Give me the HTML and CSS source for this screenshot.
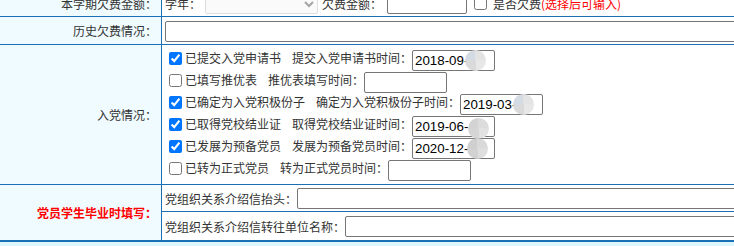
FILE: index.html
```
<!DOCTYPE html>
<html lang="zh-CN">
<head>
<meta charset="utf-8">
<title>入党情况</title>
<link rel="stylesheet" href="styles.css">
</head>
<body>
<div class="form">
  <div class="row r1">
    <div class="label">本学期欠费金额：</div>
    <div class="field">
      <span class="txt">学年：</span>
      <select class="sel" disabled><option></option></select>
      <span class="txt">欠费金额：</span>
      <input class="inp inp-fee" type="text">
      <input class="chk chk-fee" type="checkbox">
      <span class="txt">是否欠费<span class="warn">(选择后可输入)</span></span>
    </div>
  </div>
  <div class="row r2">
    <div class="label">历史欠费情况：</div>
    <div class="field"><input class="inp inp-wide" type="text"></div>
  </div>
  <div class="row r3">
    <div class="label">入党情况：</div>
    <div class="field lines">
      <div class="line">
        <input class="chk" type="checkbox" checked>
        <span class="txt">已提交入党申请书</span>
        <span class="txt gap">提交入党申请书时间：</span>
        <span class="date"><input class="inp inp-date" type="text" value="2018-09-"><i class="blur"></i></span>
      </div>
      <div class="line">
        <input class="chk" type="checkbox">
        <span class="txt">已填写推优表</span>
        <span class="txt gap">推优表填写时间：</span>
        <span class="date"><input class="inp inp-date" type="text"></span>
      </div>
      <div class="line">
        <input class="chk" type="checkbox" checked>
        <span class="txt">已确定为入党积极份子</span>
        <span class="txt gap">确定为入党积极份子时间：</span>
        <span class="date"><input class="inp inp-date" type="text" value="2019-03-"><i class="blur"></i></span>
      </div>
      <div class="line">
        <input class="chk" type="checkbox" checked>
        <span class="txt">已取得党校结业证</span>
        <span class="txt gap">取得党校结业证时间：</span>
        <span class="date"><input class="inp inp-date" type="text" value="2019-06-"><i class="blur blur-d"></i></span>
      </div>
      <div class="line">
        <input class="chk" type="checkbox" checked>
        <span class="txt">已发展为预备党员</span>
        <span class="txt gap">发展为预备党员时间：</span>
        <span class="date"><input class="inp inp-date" type="text" value="2020-12-"><i class="blur blur-e"></i></span>
      </div>
      <div class="line">
        <input class="chk" type="checkbox">
        <span class="txt">已转为正式党员</span>
        <span class="txt gap">转为正式党员时间：</span>
        <span class="date"><input class="inp inp-date" type="text"></span>
      </div>
    </div>
  </div>
  <div class="row r4">
    <div class="label red">党员学生毕业时填写：</div>
    <div class="field sub">
      <div class="subrow"><span class="txt">党组织关系介绍信抬头：</span><input class="inp inp-wide" type="text"></div>
      <div class="subrow"><span class="txt">党组织关系介绍信转往单位名称：</span><input class="inp inp-wide" type="text"></div>
    </div>
  </div>
</div>
</body>
</html>
```
FILE: styles.css
```
html, body {
  margin: 0;
  overflow: hidden;
  background: #dcf6fc;
}
body {
  font-family: "Microsoft YaHei", "Noto Sans CJK SC", sans-serif;
  font-size: 12px;
  color: #333;
}
.form {
  width: 1100px;
  margin-top: -10px;
}
.row {
  display: grid;
  grid-template-columns: 162px 1fr;
  border-bottom: 1px solid #1b6fb5;
  background: #fff;
}
.label {
  box-sizing: border-box;
  background: #effbff;
  border-right: 1px solid #1b6fb5;
  display: flex;
  align-items: center;
  justify-content: flex-end;
  padding-right: 4px;
  white-space: nowrap;
}
.red {
  color: #f00;
  font-weight: bold;
}
.field {
  display: flex;
  align-items: center;
  padding: 3px 3px 2px;
  white-space: nowrap;
}
.r2 .field {
  padding: 4px 3px 2px;
}
.lines {
  flex-direction: column;
  align-items: flex-start;
  padding: 5px 3px 2px;
}
.r4 {
  border-bottom: 2px solid #1b6fb5;
}
.sub {
  flex-direction: column;
  align-items: stretch;
  padding: 0;
}
.subrow {
  display: flex;
  align-items: center;
  padding: 3px 3px 2px;
}
.subrow + .subrow {
  border-top: 1px solid #1b6fb5;
  padding: 4px 3px 3px;
}
.txt {
  line-height: 15px;
}
.warn {
  color: #f00;
}
.inp {
  box-sizing: border-box;
  height: 21px;
  margin: 0;
  padding: 1px 2px;
  border: 1px solid #767676;
  border-radius: 2px;
  background: #fff;
  color: #000;
  font: 13.333px "Liberation Sans", Arial, sans-serif;
  outline: none;
}
.inp-fee {
  width: 80px;
  margin-left: 5px;
}
.inp-date {
  width: 83px;
}
.inp-wide {
  width: 760px;
}
.sel {
  box-sizing: border-box;
  width: 113px;
  height: 20px;
  margin: 0 4px;
  font-size: 12px;
}
.chk {
  width: 13px;
  height: 13px;
  margin: 2px 3px 0 4px;
  flex: none;
}
.chk-fee {
  margin: 0 6px 0 7px;
}
.line {
  display: flex;
  align-items: flex-start;
  height: 22px;
}
.gap {
  margin-left: 11px;
}
.date {
  position: relative;
  display: block;
  height: 21px;
}
.blur {
  position: absolute;
  left: 53px;
  top: 0;
  width: 21px;
  height: 21px;
  border-radius: 50%;
  background: conic-gradient(#e3e3e3 0 25%, #e7e7e7 0 50%, #dadada 0 75%, #d5dbe3 0);
}
.blur-d {
  left: 56px;
  top: 2px;
  background: conic-gradient(#dcdcdc 0 25%, #e2e2e2 0 50%, #d6d6d6 0 75%, #d3d3d3 0);
}
.blur-e {
  left: 55px;
  top: 0;
  background: conic-gradient(#d9d9d9 0 25%, #dedede 0 50%, #d2d2d2 0 75%, #cfcfcf 0);
}
```
